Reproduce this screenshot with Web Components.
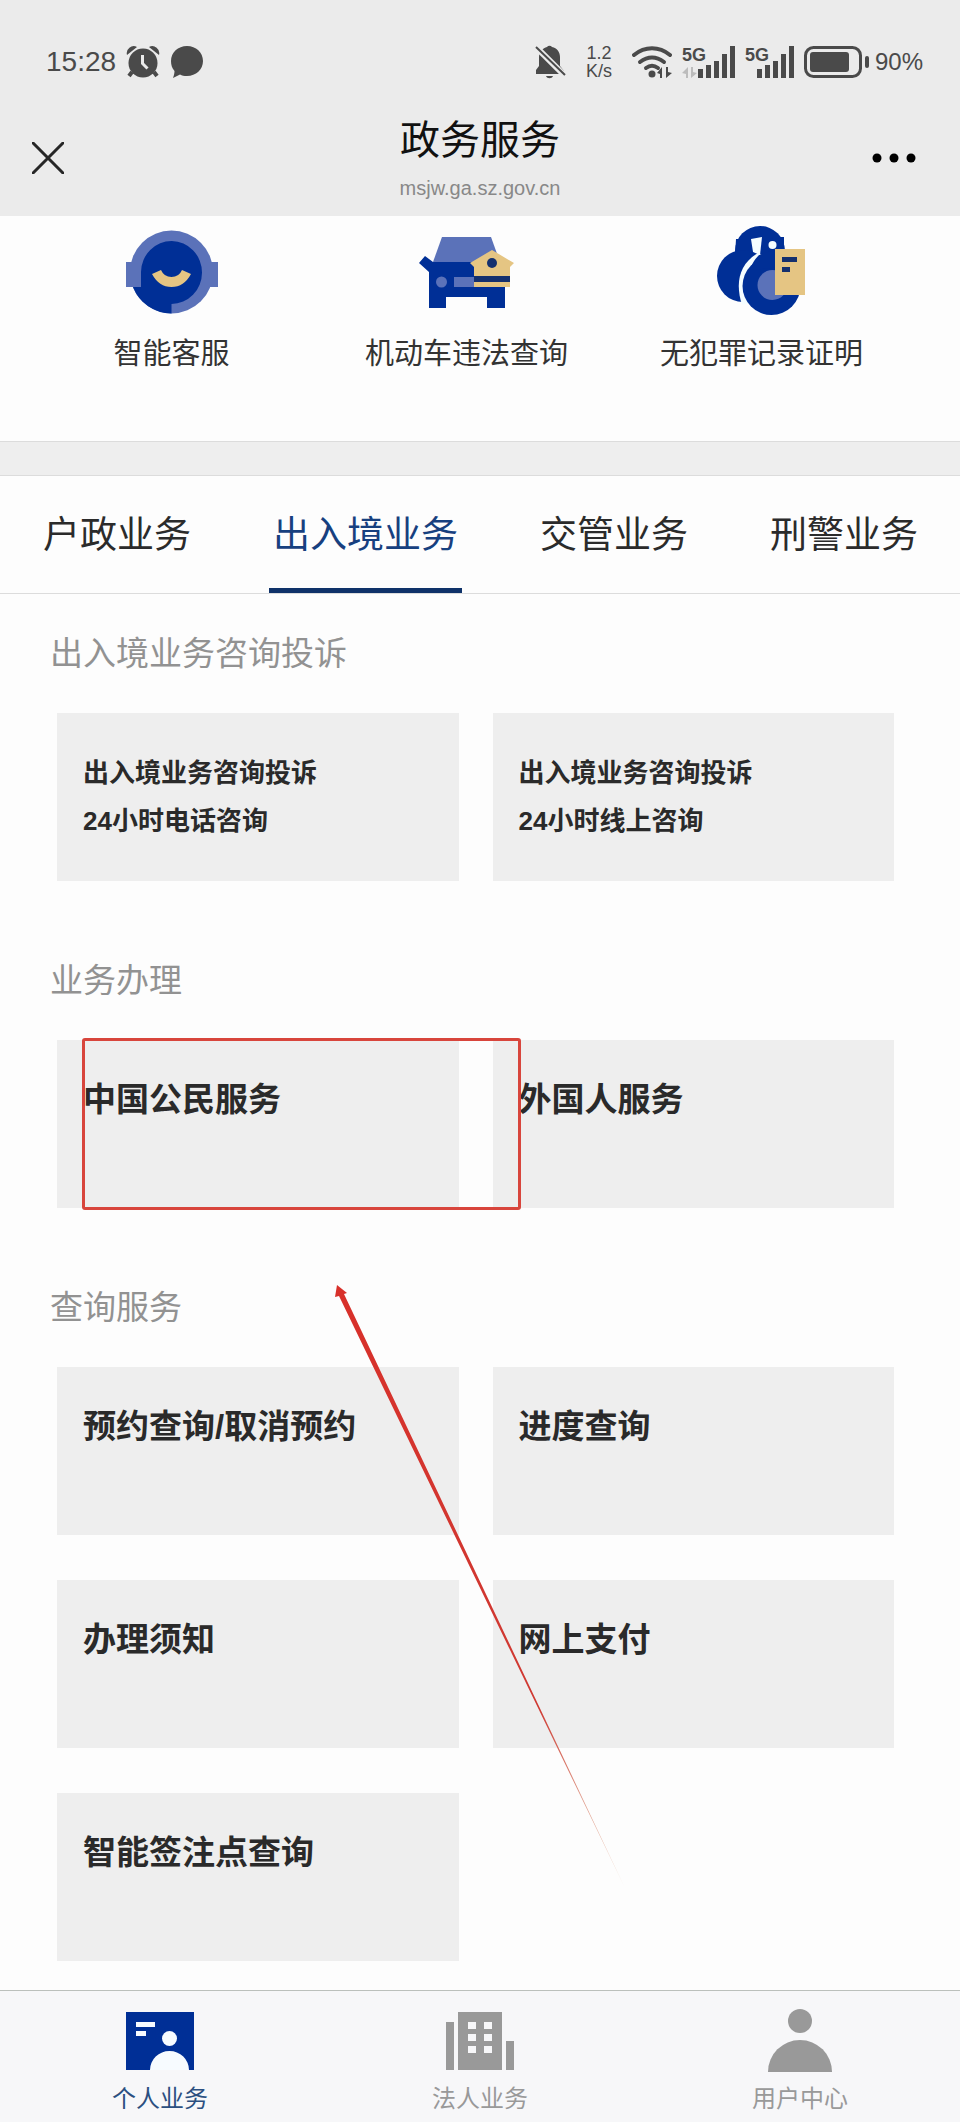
<!DOCTYPE html>
<html lang="zh-CN">
<head>
<meta charset="utf-8">
<meta name="viewport" content="width=device-width, initial-scale=1">
<title>政务服务</title>
<style>
  body {
    margin: 0;
    min-height: 100vh;
    background: #fdfdfd;
    color: #2b2b2b;
    font-family: "Liberation Sans", "Noto Sans CJK SC", sans-serif;
  }
  header {
    background: #ebebeb;
  }
  .services {
    display: flex;
    padding: 10px 51px 67px 24px;
  }
  .divider {
    height: 33px;
    background: #eee;
    border-top: 1px solid #dcdcdc;
    border-bottom: 1px solid #dcdcdc;
  }
  main {
    position: relative;
    padding-bottom: 29px;
  }
</style>
</head>
<body>

<header>
  <status-bar></status-bar>
  <nav-bar>
    政务服务
    <span slot="host">msjw.ga.sz.gov.cn</span>
  </nav-bar>
</header>

<section class="services">
  <service-link icon="support">智能客服</service-link>
  <service-link icon="car">机动车违法查询</service-link>
  <service-link icon="record">无犯罪记录证明</service-link>
</section>

<div class="divider"></div>

<business-tabs>
  <business-tab>户政业务</business-tab>
  <business-tab active>出入境业务</business-tab>
  <business-tab>交管业务</business-tab>
  <business-tab>刑警业务</business-tab>
</business-tabs>

<main>
  <tile-section>
    <span slot="title">出入境业务咨询投诉</span>
    <service-tile small>出入境业务咨询投诉<br>24小时电话咨询</service-tile>
    <service-tile small>出入境业务咨询投诉<br>24小时线上咨询</service-tile>
  </tile-section>
  <tile-section>
    <span slot="title">业务办理</span>
    <service-tile marked>中国公民服务</service-tile>
    <service-tile>外国人服务</service-tile>
  </tile-section>
  <tile-section>
    <span slot="title">查询服务</span>
    <service-tile>预约查询/取消预约</service-tile>
    <service-tile>进度查询</service-tile>
    <service-tile>办理须知</service-tile>
    <service-tile>网上支付</service-tile>
    <service-tile>智能签注点查询</service-tile>
  </tile-section>
  <guide-arrow></guide-arrow>
</main>

<bottom-bar>
  <bottom-item icon="personal" active>个人业务</bottom-item>
  <bottom-item icon="company">法人业务</bottom-item>
  <bottom-item icon="user">用户中心</bottom-item>
</bottom-bar>

<template id="status-bar">
  <style>
    :host {
      display: flex;
      justify-content: space-between;
      align-items: center;
      height: 32px;
      padding: 46px 37px 14px 46px;
      color: #4a4a4a;
    }
    div {
      display: flex;
      align-items: center;
      gap: 10px;
    }
    svg {
      display: block;
      fill: currentColor;
    }
    .time {
      font-size: 28px;
    }
    .speed {
      padding: 0 10px;
      font-size: 18px;
      line-height: 18px;
      text-align: center;
    }
    .power {
      gap: 6px;
      font-size: 24px;
    }
    text {
      font-size: 18px;
      font-weight: bold;
    }
  </style>
  <div>
    <span class="time">15:28</span>
    <svg width="34" height="32" viewBox="0 0 34 32">
      <circle cx="17" cy="17" r="14.5"/>
      <path d="M1 9a7 7 0 0 1 10-8zM33 9a7 7 0 0 0-10-8z"/>
      <path d="M6 26l-3 4M28 26l3 4" stroke="currentColor" stroke-width="4"/>
      <path d="M16.500 9v8.500l5 5" fill="none" stroke="#ebebeb" stroke-width="3"/>
    </svg>
    <svg width="34" height="32" viewBox="0 0 34 32">
      <path d="M17 0c9 0 16 6.500 16 15s-7 15-16 15c-3 0-5-.5-7-1.500L3 32c1-3 1.500-5 1.500-7C2 22 1 19 1 15 1 6.500 8 0 17 0z"/>
    </svg>
  </div>
  <div>
    <svg width="31" height="34" viewBox="0 0 31 34">
      <path d="M1 29v-4l3-4v-9c0-5 4-9 8-10a3 3 0 0 1 5 0c5 1 8 5 8 10v9l4 5v3zM11 31h7c-1 3-6 3-7 0z"/>
      <path d="M0 1l30 30" stroke="#ebebeb" stroke-width="6"/>
      <path d="M1 2l29 28" stroke="currentColor" stroke-width="2"/>
    </svg>
    <span class="speed">1.2<br>K/s</span>
    <svg width="40" height="32" viewBox="0 0 40 32">
      <g fill="none" stroke="currentColor" stroke-width="4" stroke-linecap="round">
        <path d="M2 9c11-9 25-9 36 0"/>
        <path d="M8 16c8-6 16-6 24 0"/>
        <path d="M14 22c4-3 8-3 12 0"/>
      </g>
      <circle cx="20" cy="28" r="3.500"/>
      <path d="M25 27l5-6v11h-2v-4zM40 27l-6 5V21h2v5z"/>
    </svg>
    <svg width="53" height="32" viewBox="0 0 53 32">
      <text x="0" y="15">5G</text>
      <path d="M0 27l6-6v11H4v-4zM15 27l-6 5V21h2v5z" fill="#bcbcbc"/>
      <path d="M16 23h5v9h-5zM24 19h5v13h-5zM32 15h5v17h-5zM40 8h5v24h-5zM48 0h5v32h-5z"/>
    </svg>
    <svg width="49" height="32" viewBox="0 0 49 32">
      <text x="0" y="15">5G</text>
      <path d="M12 23h5v9h-5zM20 19h5v13h-5zM28 15h5v17h-5zM36 8h5v24h-5zM44 0h5v32h-5z"/>
    </svg>
    <div class="power">
      <svg width="65" height="32" viewBox="0 0 65 32">
        <rect x="1.500" y="1.500" width="55" height="29" rx="8" fill="none" stroke="currentColor" stroke-width="3"/>
        <rect x="6" y="6" width="39" height="20" rx="3"/>
        <rect x="61" y="10" width="4" height="12" rx="2"/>
      </svg>
      <span>90%</span>
    </div>
  </div>
</template>

<template id="nav-bar">
  <style>
    :host {
      display: grid;
      grid-template-columns: 1fr auto 1fr;
      align-items: center;
      padding: 16px 32px 12px;
      color: #111;
    }
    h1 {
      margin: 0;
      font-size: 40px;
      font-weight: 400;
      line-height: 64px;
      text-align: center;
    }
    .host {
      font-size: 20px;
      line-height: 32px;
      color: #888;
      text-align: center;
    }
    button {
      height: 44px;
      margin-top: 4px;
      padding: 0;
      border: 0;
      background: none;
      color: inherit;
    }
    .close {
      justify-self: start;
    }
    .more {
      justify-self: end;
      padding-right: 12px;
    }
    svg {
      display: block;
      margin: auto;
    }
  </style>
  <button class="close" aria-label="关闭">
    <svg width="32" height="32" viewBox="0 0 32 32"><path d="M1 1l30 30M31 1L1 31" stroke="#262626" stroke-width="3" stroke-linecap="round"/></svg>
  </button>
  <div>
    <h1><slot></slot></h1>
    <div class="host"><slot name="host"></slot></div>
  </div>
  <button class="more" aria-label="更多">
    <svg width="44" height="10" viewBox="0 0 44 10"><circle cx="5" cy="5" r="4.500"/><circle cx="22" cy="5" r="4.500"/><circle cx="39" cy="5" r="4.500"/></svg>
  </button>
</template>

<template id="service-link">
  <style>
    :host {
      display: block;
      flex: 1;
    }
    a {
      display: flex;
      flex-direction: column;
      align-items: center;
      gap: 18px;
      color: #333;
      font-size: 29px;
      line-height: 40px;
      text-decoration: none;
      white-space: nowrap;
    }
    svg {
      display: block;
    }
  </style>
  <a href="#"><span id="icon"></span><slot></slot></a>
</template>

<template id="business-tabs">
  <style>
    :host {
      display: flex;
      gap: 74px;
      padding: 0 36px 0 39px;
      border-bottom: 1px solid #dcdcdc;
    }
  </style>
  <slot></slot>
</template>

<template id="business-tab">
  <style>
    :host {
      display: block;
    }
    button {
      display: block;
      padding: 31px 4px 24px;
      border: 0;
      border-bottom: 5px solid transparent;
      background: none;
      color: #2b2b2b;
      font: inherit;
      font-size: 37px;
      line-height: 57px;
      white-space: nowrap;
    }
    :host([active]) button {
      color: #17407f;
      border-color: #0f3269;
    }
  </style>
  <button><slot></slot></button>
</template>

<template id="tile-section">
  <style>
    :host {
      display: block;
      padding: 76px 66px 0 57px;
    }
    :host(:first-child) {
      padding-top: 36px;
    }
    h2 {
      margin: 0 -7px 35px;
      color: #929292;
      font-size: 33px;
      font-weight: 400;
      line-height: 48px;
    }
    .tiles {
      display: grid;
      grid-template-columns: 1fr 1fr;
      gap: 45px 34px;
    }
  </style>
  <h2><slot name="title"></slot></h2>
  <div class="tiles"><slot></slot></div>
</template>

<template id="service-tile">
  <style>
    :host {
      display: block;
      position: relative;
    }
    a {
      display: block;
      box-sizing: border-box;
      height: 100%;
      min-height: 168px;
      padding: 36px 26px;
      background: #eee;
      color: #2a2a2a;
      font-size: 33px;
      font-weight: bold;
      line-height: 48px;
      text-decoration: none;
    }
    :host([small]) a {
      font-size: 26px;
    }
    .mark {
      display: none;
    }
    /* the mark reaches over the gap into the next tile */
    :host([marked]) .mark {
      display: block;
      position: absolute;
      z-index: 1;
      top: -2px;
      bottom: -2px;
      left: 25px;
      right: -62px;
      border: 3px solid #d8453c;
      border-radius: 3px;
      pointer-events: none;
    }
  </style>
  <a href="#"><slot></slot></a>
  <div class="mark"></div>
</template>

<template id="guide-arrow">
  <style>
    :host {
      display: block;
      position: absolute;
      z-index: 2;
      top: 690px;
      left: 334px;
      pointer-events: none;
    }
    svg {
      display: block;
    }
  </style>
  <svg width="294" height="606" viewBox="0 0 294 606">
    <defs>
      <linearGradient id="fade" x1="0" y1="0" x2="0" y2="1">
        <stop offset="0" stop-color="#d8302a"/>
        <stop offset=".7" stop-color="#cf3a33"/>
        <stop offset="1" stop-color="#cf8a60" stop-opacity=".3"/>
      </linearGradient>
    </defs>
    <path d="M3 1l10 8-3 1L291 604 5 12l-4 1z" fill="url(#fade)"/>
  </svg>
</template>

<template id="bottom-bar">
  <style>
    :host {
      display: flex;
      background: #f7f7f9;
      border-top: 1px solid #bcc0bc;
    }
  </style>
  <slot></slot>
</template>

<template id="bottom-item">
  <style>
    :host {
      display: block;
      flex: 1;
      color: #999;
    }
    :host([active]) {
      color: #2b4f80;
    }
    a {
      display: flex;
      flex-direction: column;
      align-items: center;
      gap: 10px;
      padding: 18px 0 6px;
      color: inherit;
      font-size: 24px;
      line-height: 34px;
      text-decoration: none;
    }
    svg {
      display: block;
    }
  </style>
  <a href="#"><span id="icon"></span><slot></slot></a>
</template>

<script>
  const ICONS = {
    support: `
      <svg width="92" height="90" viewBox="0 -4 92 90">
        <circle cx="45.500" cy="42" r="41.500" fill="#5b72b9"/>
        <path d="M0 32h16v25H0zM76 32h16v25H76z" fill="#5b72b9"/>
        <path d="M15 42a30.500 31.500 0 1 1 30.500 32v9.500A41.500 41.500 0 0 1 7 57h8z" fill="#002f96"/>
        <path d="M26 44l9-4q3 7 10.500 7T56 40l9 4q-7 13-19.500 13T26 44z" fill="#e5c583"/>
      </svg>`,
    car: `
      <svg width="96" height="90" viewBox="0 -11 96 90">
        <path d="M23 0h49l9 25H14z" fill="#5b72b9"/>
        <path d="M0 26l6-7 8 6h72v46H68V60H27v11H10V35z" fill="#002f96"/>
        <circle cx="22.500" cy="45" r="5.500" fill="#5b72b9"/>
        <path d="M35 40h21v10H35z" fill="#5b72b9"/>
        <path d="M73 13l22 13-4 4v20H55V30l-4-4z" fill="#e5c583"/>
        <path d="M55 39h36v6H55z" fill="#14306e"/>
        <circle cx="73" cy="26" r="5" fill="#14306e"/>
      </svg>`,
    record: `
      <svg width="89" height="90" viewBox="0 0 89 90">
        <circle cx="43" cy="25" r="25" fill="#002f96"/>
        <path d="M19 13h12v18H18zM56 11h11v22H50z" fill="#002f96"/>
        <circle cx="26" cy="50" r="26" fill="#002f96"/>
        <path d="M41 27C22 38 18 57 25 79l20-5V29z" fill="#f5fdff"/>
        <circle cx="54.500" cy="60" r="29" fill="#002f96"/>
        <path d="M42 29l24-8v20L33 44q2-8 9-15z" fill="#002f96"/>
        <path d="M34 13l11-2-2 18-7-3z" fill="#f5fdff"/>
        <circle cx="55.500" cy="19" r="4" fill="#f5fdff"/>
        <circle cx="55.500" cy="59" r="15" fill="#5b72b9"/>
        <path d="M58 23h30v46H58z" fill="#e5c583"/>
        <path d="M65 31h15v5H65zM65 41h8v5h-8z" fill="#14306e"/>
      </svg>`,
    personal: `
      <svg width="68" height="63" viewBox="0 -3 68 63">
        <path d="M0 0h68v58H0z" fill="#002f96"/>
        <path d="M10 10h19v5H10zM10 19h10v5H10zM24 58a19.500 19 0 0 1 39 0z" fill="#f7fbff"/>
        <circle cx="43.500" cy="26.500" r="7.500" fill="#f7fbff"/>
      </svg>`,
    company: `
      <svg width="68" height="63" viewBox="0 -3 68 63">
        <path d="M0 10h8v48H0zM12 0h44v58H12zM60 29h8v29h-8z" fill="#999"/>
        <path d="M22 10h8v7h-8zM38 10h8v7h-8zM22 22h8v7h-8zM38 22h8v7h-8zM22 34h8v7h-8zM38 34h8v7h-8z" fill="#f7f7f9"/>
      </svg>`,
    user: `
      <svg width="64" height="63" viewBox="0 0 64 63">
        <circle cx="32" cy="12" r="12" fill="#999"/>
        <path d="M0 63a32 32 0 0 1 64 0z" fill="#999"/>
      </svg>`
  };

  // Base class: clones the <template> that has the element's own name
  class TemplateElement extends HTMLElement {
    constructor() {
      super();
      const template = document.getElementById(this.localName);
      this.attachShadow({mode: 'open'}).appendChild(template.content.cloneNode(true));
    }
  }

  // Fills the #icon holder from the "icon" attribute
  class IconElement extends TemplateElement {
    connectedCallback() {
      this.shadowRoot.getElementById('icon').innerHTML = ICONS[this.getAttribute('icon')] || '';
    }
  }

  class BusinessTab extends TemplateElement {
    connectedCallback() {
      this.addEventListener('click', () => {
        for (const tab of this.parentElement.children) {
          tab.toggleAttribute('active', tab === this);
        }
      });
    }
  }

  customElements.define('status-bar', class extends TemplateElement {});
  customElements.define('nav-bar', class extends TemplateElement {});
  customElements.define('service-link', class extends IconElement {});
  customElements.define('business-tabs', class extends TemplateElement {});
  customElements.define('business-tab', BusinessTab);
  customElements.define('tile-section', class extends TemplateElement {});
  customElements.define('service-tile', class extends TemplateElement {});
  customElements.define('guide-arrow', class extends TemplateElement {});
  customElements.define('bottom-bar', class extends TemplateElement {});
  customElements.define('bottom-item', class extends IconElement {});
</script>
</body>
</html>
